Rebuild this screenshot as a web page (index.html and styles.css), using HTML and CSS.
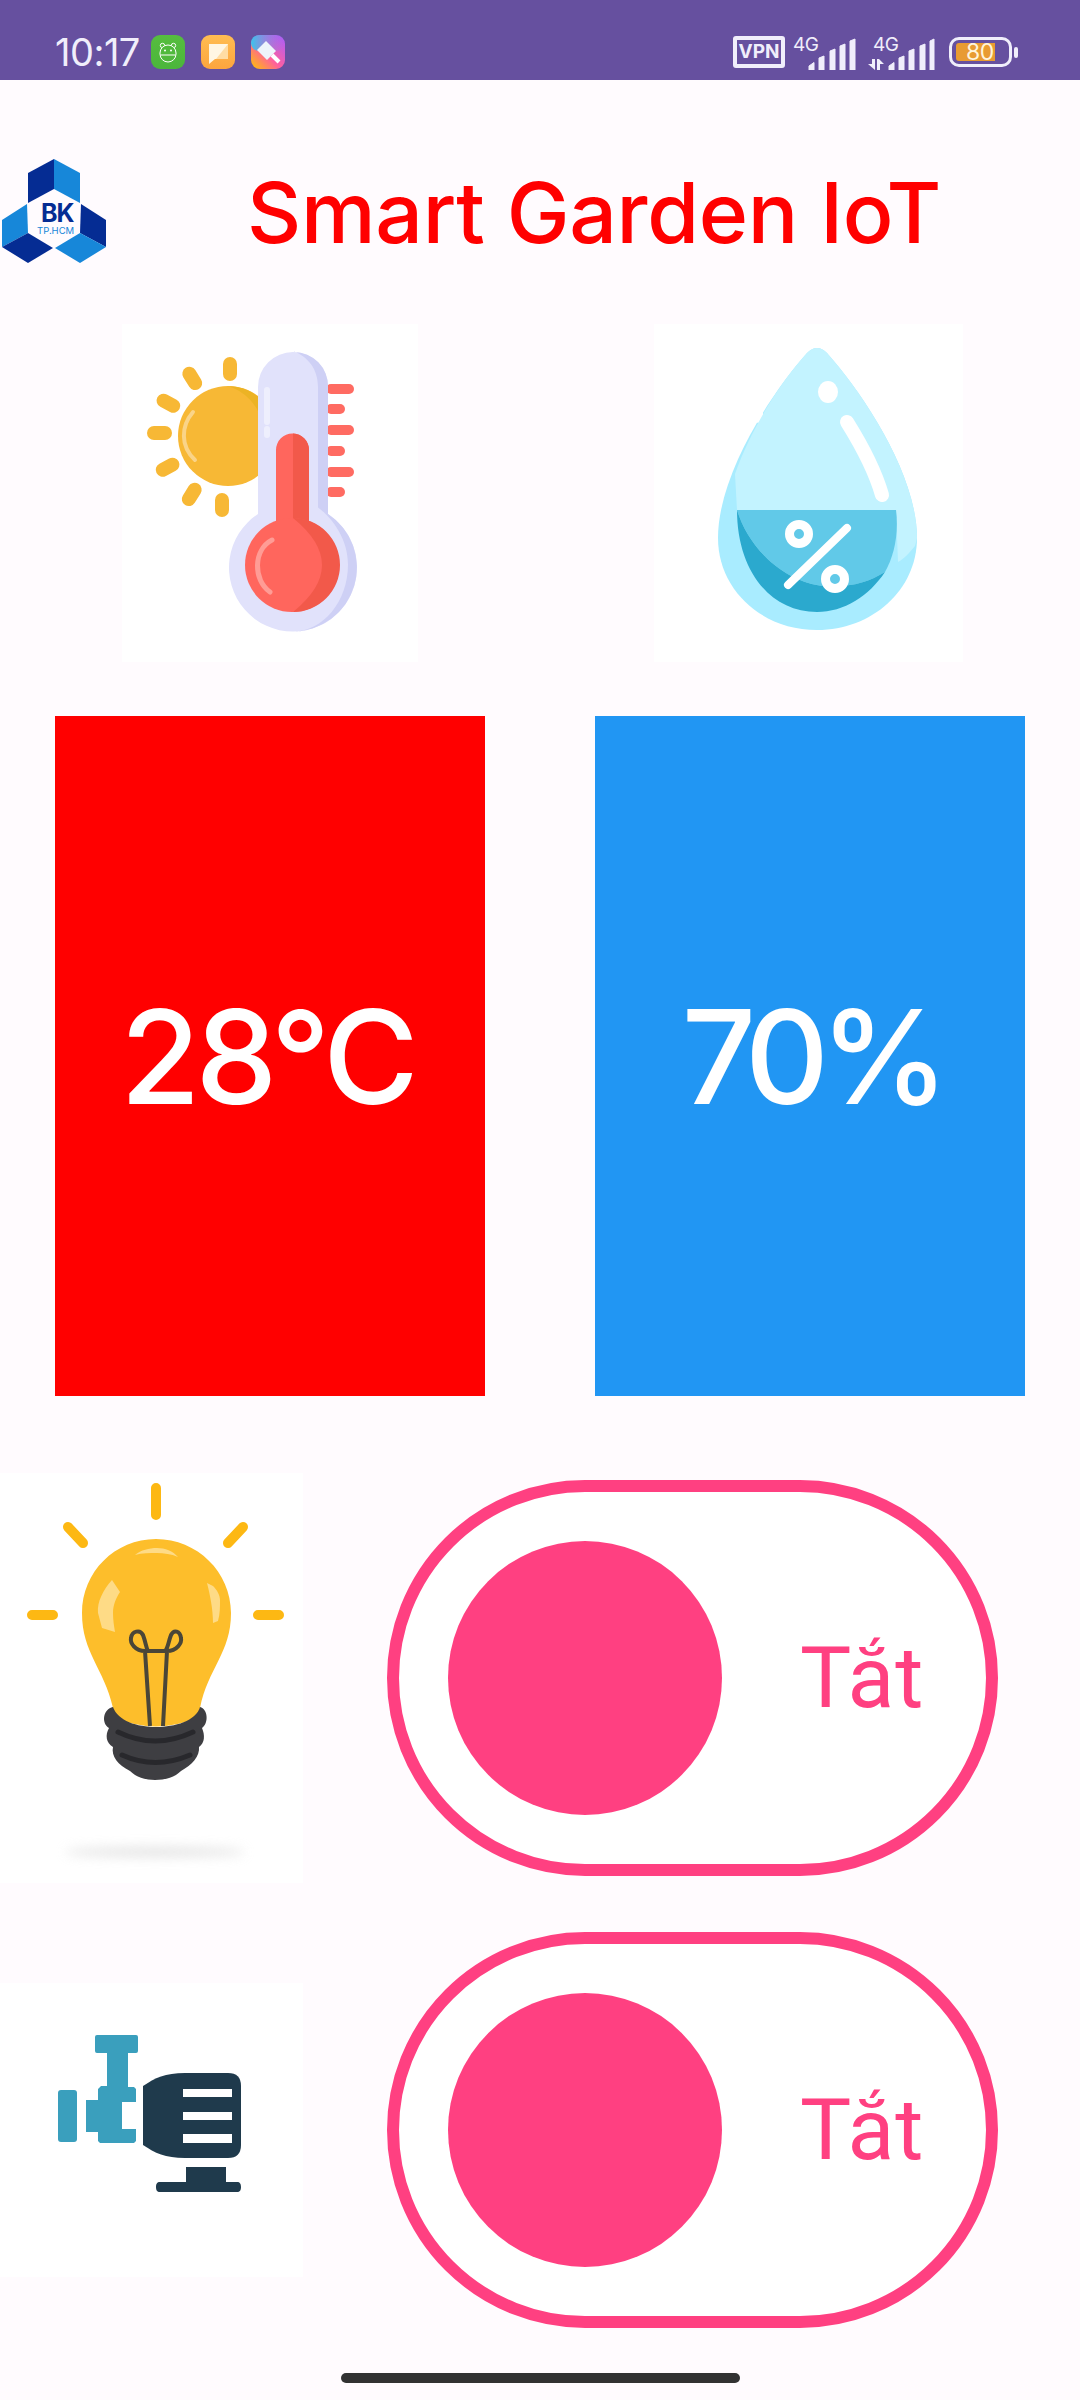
FILE: index.html
```html
<!DOCTYPE html>
<html lang="vi">
<head>
<meta charset="utf-8">
<title>Smart Garden IoT</title>
<link rel="stylesheet" href="styles.css">
</head>
<body>
<div class="screen">
  <header class="status">
    <div class="status-left">
      <span class="clock">10:17</span>
      <svg class="app" viewBox="0 0 34 34"><defs><linearGradient id="g1" x1="0" y1="0" x2="0" y2="1"><stop offset="0" stop-color="#56bd3f"/><stop offset="1" stop-color="#4bb63b"/></linearGradient></defs><rect width="34" height="34" rx="9" fill="url(#g1)"/><circle cx="11.5" cy="10.5" r="2.2" fill="none" stroke="#fff" stroke-width="1"/><circle cx="22.5" cy="10.5" r="2.2" fill="none" stroke="#fff" stroke-width="1"/><rect x="9" y="10" width="16" height="17" rx="8" fill="#50b93d" stroke="#fff" stroke-width="1"/><path d="M9.5 20h15" stroke="#fff" stroke-width="1"/><circle cx="14" cy="15.500" r="1" fill="#fff"/><circle cx="20" cy="15.500" r="1" fill="#fff"/></svg>
      <svg class="app" viewBox="0 0 34 34"><defs><linearGradient id="g2" x1="0" y1="0" x2="0" y2="1"><stop offset="0" stop-color="#ffbd52"/><stop offset="1" stop-color="#fda53e"/></linearGradient></defs><rect width="34" height="34" rx="9" fill="url(#g2)"/><path d="M8 9h19v15H14l-6 5z" fill="#fff6e3"/><path d="M27 9v15H15z" fill="#ffdca3"/></svg>
      <svg class="app" viewBox="0 0 34 34"><defs><linearGradient id="g3" x1="0" y1="1" x2="1" y2="0"><stop offset="0" stop-color="#ffc400"/><stop offset=".45" stop-color="#ff5f9e"/><stop offset="1" stop-color="#a95cff"/></linearGradient><linearGradient id="g4" x1="0" y1="0" x2="1" y2="0"><stop offset="0" stop-color="#39c4ee"/><stop offset="1" stop-color="#7d7cff" stop-opacity="0"/></linearGradient></defs><rect width="34" height="34" rx="9" fill="url(#g3)"/><rect width="34" height="16" rx="8" fill="url(#g4)"/><path d="M6 15 15 6l10 10-9 9z" fill="#eef4fb"/><path d="M21 20l7 7" stroke="#fff" stroke-width="4"/></svg>
    </div>
    <div class="status-right">
      <span class="vpn">VPN</span>
      <span class="net"><span class="net-label">4G</span>
        <svg class="bars" viewBox="0 0 48 32"><path d="M1 32v-4l5-3.500V32zM11 32V20l5-2V32zM22 32V13l5-2V32zM32 32V8l5-2V32zM42 32V3l5-2V32z" fill="#f0eefb" stroke="#f0eefb" stroke-linejoin="round"/></svg>
      </span>
      <span class="net net-second"><span class="net-label">4G</span>
        <svg class="bars bars-wide" viewBox="0 0 67 32"><path d="M7 21V32L0 26H4V21ZM9 21h2L16 26H12V32H9Z" fill="#f0eefb"/><path d="M21 32v-4l5-3.500V32zM31 32V20l5-2V32zM41 32V13l5-2V32zM52 32V8l5-2V32zM62 32V3l4-2V32z" fill="#f0eefb" stroke="#f0eefb" stroke-linejoin="round"/></svg>
      </span>
      <span class="battery"><span class="battery-fill"></span><span class="battery-num">80</span></span>
      <span class="battery-tip"></span>
    </div>
  </header>

  <section class="title-row">
    <svg class="logo" viewBox="0 0 104 104">
      <path d="M52 0 26 14v30l26-14z" fill="#052c93"/>
      <path d="M52 0l26 14v30L52 30z" fill="#1787d9"/>
      <path d="M25 45 0 61v27l26-14z" fill="#1787d9"/>
      <path d="M79 45l25 16v27L78 74z" fill="#052c93"/>
      <path d="M0 88l26 16 25-15-25-15z" fill="#052c93"/>
      <path d="M53 89l25 15 26-16-26-14z" fill="#1787d9"/>
      <text class="logo-bk" x="39" y="63">BK</text>
      <text class="logo-sub" x="35" y="75">TP.HCM</text>
    </svg>
    <h1 class="title">Smart Garden IoT</h1>
  </section>

  <section class="sensor-icons">
    <div class="pic pic-temp">
      <svg viewBox="0 0 296 338" class="fill-svg">
        <g fill="#f7b835">
          <circle cx="106" cy="112" r="50"/>
          <rect x="101" y="33" width="14" height="24" rx="7"/>
          <rect x="93" y="169" width="14" height="24" rx="7"/>
          <rect x="25" y="102" width="25" height="14" rx="7"/>
          <rect x="63" y="42" width="14" height="25" rx="7" transform="rotate(-32 70 54)"/>
          <rect x="39" y="67" width="14" height="25" rx="7" transform="rotate(-62 46 79)"/>
          <rect x="39" y="131" width="14" height="25" rx="7" transform="rotate(62 46 143)"/>
          <rect x="63" y="158" width="14" height="25" rx="7" transform="rotate(32 70 170)"/>
        </g>
        <path d="M106 62a50 50 0 0 1 34 14v22a50 50 0 0 0-34-36z" fill="#ecb325"/>
        <path d="M71 88c-12 14-13 34 2 48" fill="none" stroke="#fad488" stroke-width="4" stroke-linecap="round"/>
        <g fill="#ff6b62">
          <rect x="204" y="60" width="28" height="10" rx="5"/>
          <rect x="204" y="80" width="19" height="10" rx="5"/>
          <rect x="204" y="101" width="28" height="10" rx="5"/>
          <rect x="204" y="122" width="19" height="10" rx="5"/>
          <rect x="204" y="143" width="28" height="10" rx="5"/>
          <rect x="204" y="163" width="19" height="10" rx="5"/>
        </g>
        <path d="M136 63a35 35 0 0 1 70 0v127a64 64 0 1 1-70 0z" fill="#e1e2fb"/>
        <path d="M172 28a34 34 0 0 1 34 35v127a64 64 0 0 1-35 117.500c30 0 55-30 55-67 0-25-15-46-30-57V63c0-18-10-30-24-35.500z" fill="#ced0f5"/>
        <path d="M154 126a16.500 16.500 0 0 1 33 0v80h-33z" fill="#ff665d"/>
        <path d="M171 109.500a16.500 16.500 0 0 1 16 16.500v80h-16z" fill="#f2594a"/>
        <circle cx="170" cy="241" r="47" fill="#ff665d"/>
        <path d="M171 194a47 47 0 0 1 0 94Q229 241 171 194z" fill="#f2594a"/>
        <path d="M150 216c-19 10-19 40-2 52" fill="none" stroke="#ff9c95" stroke-width="5" stroke-linecap="round"/>
        <path d="M145 66v46" stroke="#eeeffd" stroke-width="6" stroke-linecap="round" stroke-dasharray="32 7 6"/>
      </svg>
    </div>
    <div class="pic pic-drop">
      <svg viewBox="0 0 309 338" class="fill-svg">
        <path d="M163 24c-4 0-7 2-10 5C118 68 64 150 64 214c0 52 44 92 99 92s100-40 100-92C263 150 208 68 173 29c-3-3-6-5-10-5z" fill="#a9ecff"/>
        <path d="M163 24c-4 0-7 2-10 5C125 60 97 105 81 150l2 36h159l2 52c6-3 12-10 17-16 2-7 2-8 2-8C263 150 208 68 173 29c-3-3-6-5-10-5z" fill="#c3f3ff"/>
        <path d="M83 186H242c3 24-2 46-11 62-16 10-36 16-61 14-40-4-75-37-87-76z" fill="#61c9e8"/>
        <path d="M83 186c0 59 32 102 80 102 27 0 52-16 68-40-16 10-36 16-61 14-40-4-75-37-87-76z" fill="#2ba9ce"/>
        <circle cx="145" cy="210" r="9.500" fill="none" stroke="#fff" stroke-width="9"/>
        <circle cx="181" cy="255" r="9.500" fill="none" stroke="#fff" stroke-width="9"/>
        <path d="M134 261l59-57" stroke="#fff" stroke-width="8" stroke-linecap="round"/>
        <ellipse cx="174" cy="68" rx="10" ry="11" fill="#fff"/>
        <path d="M193 98c15 24 29 52 35 73" stroke="#fff" stroke-width="14" stroke-linecap="round" fill="none"/>
      </svg>
    </div>
  </section>

  <section class="cards">
    <div class="card card-red">28°C</div>
    <div class="card card-blue">70%</div>
  </section>

  <section class="control control-light">
    <div class="pic pic-bulb">
      <svg viewBox="0 0 303 410" class="fill-svg">
        <path d="M156 15v27M68 54l15 16M243 54l-15 16M32 142h21M258 142h21" stroke="#fdb813" stroke-width="10" stroke-linecap="round"/>
        <path d="M156 66C115 66 82 99 82 140c0 40 22 55 31 95l3 10q40 17 80 0l4-10c8-40 31-55 31-95 0-41-34-74-75-74z" fill="#fdbe2b"/>
        <path d="M112 107c-9 10-15 22-14 33l4 15 13 4c-1-6-2-12-2-19 0-8 3-15 7-21z" fill="#fedb86"/>
        <path d="M207 110c3 12 6 26 6 40l5-2c2-7 2-14 2-21 0-5-3-10-7-14z" fill="#fedb86"/>
        <path d="M135 82c6-5 14-7 22-7 8 0 16 3 21 9-7-3-14-4-21-4s-15 0-22 2z" fill="#fedb86"/>
        <path d="M150 253 145 178c-10 0-15-8-14-13 1-7 9-9 12-3 3 8 3 13 5 16h17c3-3 3-8 6-16 3-6 9-4 10 3 1 5-4 13-14 13L163 253" fill="none" stroke="#4a4638" stroke-width="4"/>
        <path d="M113 234c-10 2-12 16-4 21-4 7-3 15 4 19-2 9 5 18 17 24 6 6 15 9 25 9 11 0 20-3 26-9 11-6 19-15 18-24 6-4 6-12 3-19 7-5 6-19-2-21-4 14-25 20-44 20s-38-6-43-20z" fill="#3e3e42"/>
        <path d="M118 259q37 18 75 0M122 282q33 15 68 0" stroke="#28282c" stroke-width="5" fill="none" stroke-linecap="round"/>
        <ellipse class="bulb-shadow" cx="155" cy="379" rx="90" ry="5" fill="#d2d2d2"/>
      </svg>
    </div>
    <div class="toggle">
      <span class="knob"></span>
      <span class="toggle-text">Tắt</span>
    </div>
  </section>

  <section class="control control-pump">
    <div class="pic pic-pump">
      <svg viewBox="0 0 303 294" class="fill-svg">
        <g fill="#3a9fbd">
          <rect x="58" y="107" width="19" height="52" rx="3"/>
          <path d="M97 52h39a2 2 0 0 1 2 2v14a2 2 0 0 1-2 2h-8v34h6l2 2v13h-14v27h14v12l-2 2H100l-2-2v-9H86v-32h12v-11l3-3h6V70H97a2 2 0 0 1-2-2V54a2 2 0 0 1 2-2z"/>
        </g>
        <path d="M143 103c12-8 22-13 42-13h43q13 0 13 13v59q0 13-13 13h-43c-20 0-30-5-42-13z" fill="#1f3a4c"/>
        <g fill="#fff">
          <rect x="183" y="106" width="49" height="8"/>
          <rect x="183" y="129" width="49" height="8"/>
          <rect x="183" y="151" width="49" height="9"/>
        </g>
        <path d="M186 184h40v15h11c3 0 4 2 4 5s-1 5-4 5h-77c-3 0-4-2-4-5s1-5 4-5h26z" fill="#1f3a4c"/>
      </svg>
    </div>
    <div class="toggle">
      <span class="knob"></span>
      <span class="toggle-text">Tắt</span>
    </div>
  </section>

  <div class="home-row"><span class="home-bar"></span></div>
</div>
</body>
</html>
```

FILE: styles.css
```css
* { box-sizing: border-box; }
html, body { margin: 0; padding: 0; }
body { background: #fffbfe; font-family: "Inter", "Noto Sans", sans-serif; }
.screen { width: 1080px; height: 2400px; overflow: hidden; display: flex; flex-direction: column; background: #fffbfe; }

.status { height: 80px; flex: none; background: #66509f; color: #f0eefb; display: flex; justify-content: space-between; padding: 35px 0 0 55px; }
.status-left { display: flex; align-items: flex-start; }
.clock { font-family: "Inter", sans-serif; font-size: 38px; line-height: 34px; width: 96px; letter-spacing: -.5px; white-space: nowrap; }
.app { width: 34px; height: 34px; margin-right: 16px; flex: none; }
.status-right { display: flex; align-items: flex-start; padding-right: 62px; }
.vpn { width: 52px; height: 32px; margin-top: 1px; border: 4px solid #f0eefb; border-radius: 3px; font: 700 19px/24px "Inter", sans-serif; text-align: center; }
.net { position: relative; width: 63px; height: 34px; margin-left: 8px; }
.net-label { position: absolute; left: 0; top: 0; font: 400 19px/20px "Inter", sans-serif; letter-spacing: -.5px; }
.bars { position: absolute; right: 0; bottom: -1px; width: 48px; height: 32px; }
.net-second { width: 67px; margin-left: 12px; }
.net-second .net-label { left: 5px; }
.bars-wide { width: 67px; }
.battery { position: relative; width: 63px; height: 30px; margin-left: 14px; margin-top: 2px; border: 3px solid #f0eefb; border-radius: 10px; }
.battery-fill { position: absolute; left: 4px; top: 3px; width: 39px; height: 18px; background: #e89b32; border-radius: 3px 0 0 3px; }
.battery-num { position: absolute; left: 14px; top: 0; font: 400 23px/24px "Inter", sans-serif; letter-spacing: -.5px; color: #fff4dc; }
.battery-tip { width: 4px; height: 11px; margin: 12px 0 0 2px; background: #f0eefb; border-radius: 2px; }

.title-row { height: 244px; flex: none; display: flex; padding: 79px 0 0 2px; }
.logo { width: 104px; height: 104px; flex: none; }
.logo-bk { font: 700 25px "Inter", sans-serif; letter-spacing: -1px; fill: #052c93; }
.logo-sub { font: 400 9.500px "Inter", sans-serif; fill: #1787d9; }
.title { margin: 4px 0 0 141px; color: #f00; font-family: "Inter", sans-serif; font-weight: 500; font-size: 84px; line-height: 100px; letter-spacing: -.3px; white-space: nowrap; }

.sensor-icons { display: flex; height: 338px; flex: none; padding-left: 122px; gap: 236px; }
.pic { background: #fff; flex: none; }
.pic-temp { width: 296px; height: 338px; }
.pic-drop { width: 309px; height: 338px; }
.fill-svg { display: block; width: 100%; height: 100%; }

.cards { display: flex; gap: 110px; height: 680px; flex: none; margin-top: 54px; padding-left: 55px; }
.card { width: 430px; display: flex; align-items: center; justify-content: center; color: #fff; font-family: "Inter", sans-serif; font-size: 130px; font-weight: 500; }
.card-red { background: #f00; letter-spacing: -5px; padding-right: 6px; }
.card-blue { background: #2196f3; letter-spacing: -9px; padding-left: 2px; }

.control { display: flex; flex: none; }
.control-light { height: 397px; margin-top: 84px; align-items: flex-start; }
.control-pump { height: 396px; margin-top: 55px; align-items: center; }
.pic-bulb { width: 303px; height: 410px; margin-top: -7px; }
.pic-pump { width: 303px; height: 294px; }
.toggle { width: 611px; height: 396px; margin-left: 84px; flex: none; background: #fff; border: 12px solid #ff4081; border-radius: 198px; display: flex; align-items: center; padding-left: 49px; }
.knob { width: 274px; height: 274px; border-radius: 50%; background: #ff4081; flex: none; }
.toggle-text { margin-left: 78px; color: #ff4081; font-family: "Roboto", sans-serif; font-size: 86px; line-height: 100px; letter-spacing: 1px; }

.bulb-shadow { filter: blur(6px); opacity: .6; }

.home-row { flex: none; margin-top: 45px; display: flex; justify-content: center; }
.home-bar { width: 399px; height: 10px; border-radius: 5px; background: #323232; }
```
